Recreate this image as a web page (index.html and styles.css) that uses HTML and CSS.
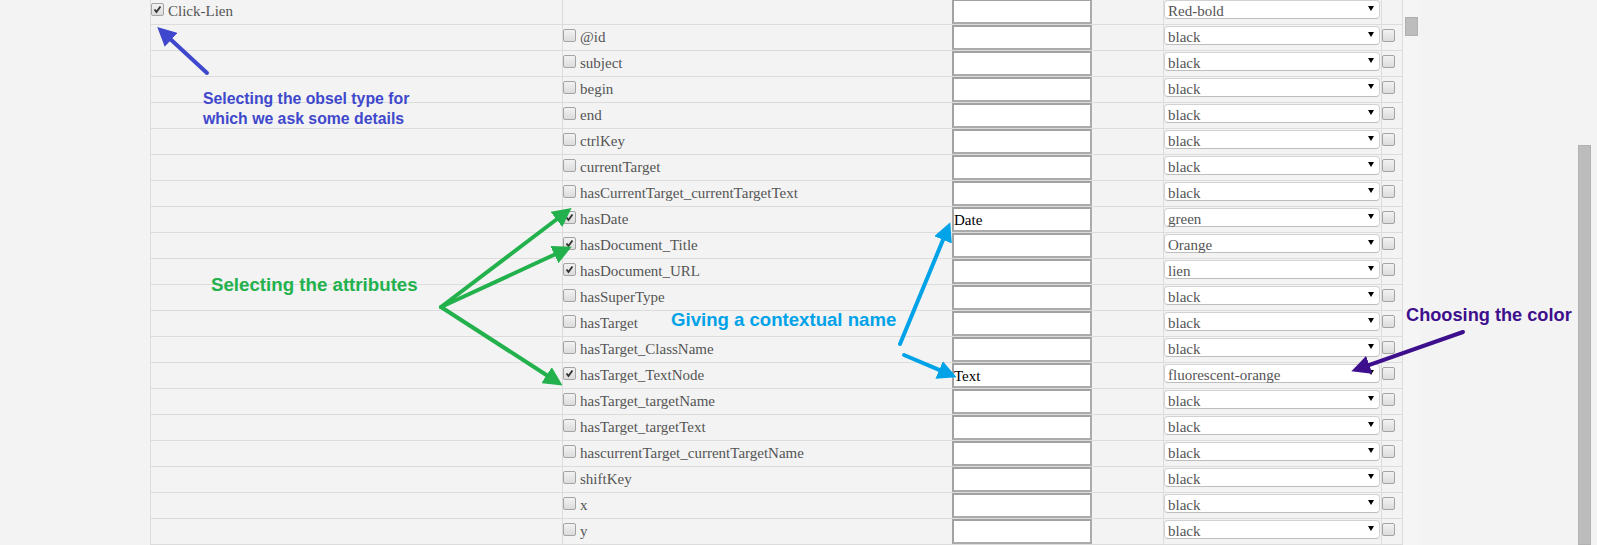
FILE: index.html
```html
<!DOCTYPE html>
<html>
<head>
<meta charset="utf-8">
<link rel="stylesheet" href="styles.css">
</head>
<body>
<div class="main">
  <div class="table">
    <div class="row">
      <div class="cell c1"><span class="cb on"><svg viewBox="0 0 13 13"><path d="M3 6.5 L5.3 9.5 L10 3" /></svg></span><span class="lbl">Click-Lien</span></div>
      <div class="cell c2"></div>
      <div class="cell c3"><div class="inp"></div></div>
      <div class="cell c4"></div>
      <div class="cell c5"><div class="sel"><span>Red-bold</span><svg class="arr" viewBox="0 0 6 5"><path d="M0 0 H6 L3 5 Z"/></svg></div></div>
      <div class="cell c6"></div>
    </div>
    <div class="row"><div class="cell c1"></div><div class="cell c2"><span class="cb"></span><span class="lbl">@id</span></div><div class="cell c3"><div class="inp"></div></div><div class="cell c4"></div><div class="cell c5"><div class="sel"><span>black</span><svg class="arr" viewBox="0 0 6 5"><path d="M0 0 H6 L3 5 Z"/></svg></div></div><div class="cell c6"><span class="cb"></span></div></div>
    <div class="row"><div class="cell c1"></div><div class="cell c2"><span class="cb"></span><span class="lbl">subject</span></div><div class="cell c3"><div class="inp"></div></div><div class="cell c4"></div><div class="cell c5"><div class="sel"><span>black</span><svg class="arr" viewBox="0 0 6 5"><path d="M0 0 H6 L3 5 Z"/></svg></div></div><div class="cell c6"><span class="cb"></span></div></div>
    <div class="row"><div class="cell c1"></div><div class="cell c2"><span class="cb"></span><span class="lbl">begin</span></div><div class="cell c3"><div class="inp"></div></div><div class="cell c4"></div><div class="cell c5"><div class="sel"><span>black</span><svg class="arr" viewBox="0 0 6 5"><path d="M0 0 H6 L3 5 Z"/></svg></div></div><div class="cell c6"><span class="cb"></span></div></div>
    <div class="row"><div class="cell c1"></div><div class="cell c2"><span class="cb"></span><span class="lbl">end</span></div><div class="cell c3"><div class="inp"></div></div><div class="cell c4"></div><div class="cell c5"><div class="sel"><span>black</span><svg class="arr" viewBox="0 0 6 5"><path d="M0 0 H6 L3 5 Z"/></svg></div></div><div class="cell c6"><span class="cb"></span></div></div>
    <div class="row"><div class="cell c1"></div><div class="cell c2"><span class="cb"></span><span class="lbl">ctrlKey</span></div><div class="cell c3"><div class="inp"></div></div><div class="cell c4"></div><div class="cell c5"><div class="sel"><span>black</span><svg class="arr" viewBox="0 0 6 5"><path d="M0 0 H6 L3 5 Z"/></svg></div></div><div class="cell c6"><span class="cb"></span></div></div>
    <div class="row"><div class="cell c1"></div><div class="cell c2"><span class="cb"></span><span class="lbl">currentTarget</span></div><div class="cell c3"><div class="inp"></div></div><div class="cell c4"></div><div class="cell c5"><div class="sel"><span>black</span><svg class="arr" viewBox="0 0 6 5"><path d="M0 0 H6 L3 5 Z"/></svg></div></div><div class="cell c6"><span class="cb"></span></div></div>
    <div class="row"><div class="cell c1"></div><div class="cell c2"><span class="cb"></span><span class="lbl">hasCurrentTarget_currentTargetText</span></div><div class="cell c3"><div class="inp"></div></div><div class="cell c4"></div><div class="cell c5"><div class="sel"><span>black</span><svg class="arr" viewBox="0 0 6 5"><path d="M0 0 H6 L3 5 Z"/></svg></div></div><div class="cell c6"><span class="cb"></span></div></div>
    <div class="row"><div class="cell c1"></div><div class="cell c2"><span class="cb on"><svg viewBox="0 0 13 13"><path d="M3 6.5 L5.3 9.5 L10 3" /></svg></span><span class="lbl">hasDate</span></div><div class="cell c3"><div class="inp">Date</div></div><div class="cell c4"></div><div class="cell c5"><div class="sel"><span>green</span><svg class="arr" viewBox="0 0 6 5"><path d="M0 0 H6 L3 5 Z"/></svg></div></div><div class="cell c6"><span class="cb"></span></div></div>
    <div class="row"><div class="cell c1"></div><div class="cell c2"><span class="cb on"><svg viewBox="0 0 13 13"><path d="M3 6.5 L5.3 9.5 L10 3" /></svg></span><span class="lbl">hasDocument_Title</span></div><div class="cell c3"><div class="inp"></div></div><div class="cell c4"></div><div class="cell c5"><div class="sel"><span>Orange</span><svg class="arr" viewBox="0 0 6 5"><path d="M0 0 H6 L3 5 Z"/></svg></div></div><div class="cell c6"><span class="cb"></span></div></div>
    <div class="row"><div class="cell c1"></div><div class="cell c2"><span class="cb on"><svg viewBox="0 0 13 13"><path d="M3 6.5 L5.3 9.5 L10 3" /></svg></span><span class="lbl">hasDocument_URL</span></div><div class="cell c3"><div class="inp"></div></div><div class="cell c4"></div><div class="cell c5"><div class="sel"><span>lien</span><svg class="arr" viewBox="0 0 6 5"><path d="M0 0 H6 L3 5 Z"/></svg></div></div><div class="cell c6"><span class="cb"></span></div></div>
    <div class="row"><div class="cell c1"></div><div class="cell c2"><span class="cb"></span><span class="lbl">hasSuperType</span></div><div class="cell c3"><div class="inp"></div></div><div class="cell c4"></div><div class="cell c5"><div class="sel"><span>black</span><svg class="arr" viewBox="0 0 6 5"><path d="M0 0 H6 L3 5 Z"/></svg></div></div><div class="cell c6"><span class="cb"></span></div></div>
    <div class="row"><div class="cell c1"></div><div class="cell c2"><span class="cb"></span><span class="lbl">hasTarget</span></div><div class="cell c3"><div class="inp"></div></div><div class="cell c4"></div><div class="cell c5"><div class="sel"><span>black</span><svg class="arr" viewBox="0 0 6 5"><path d="M0 0 H6 L3 5 Z"/></svg></div></div><div class="cell c6"><span class="cb"></span></div></div>
    <div class="row"><div class="cell c1"></div><div class="cell c2"><span class="cb"></span><span class="lbl">hasTarget_ClassName</span></div><div class="cell c3"><div class="inp"></div></div><div class="cell c4"></div><div class="cell c5"><div class="sel"><span>black</span><svg class="arr" viewBox="0 0 6 5"><path d="M0 0 H6 L3 5 Z"/></svg></div></div><div class="cell c6"><span class="cb"></span></div></div>
    <div class="row"><div class="cell c1"></div><div class="cell c2"><span class="cb on"><svg viewBox="0 0 13 13"><path d="M3 6.5 L5.3 9.5 L10 3" /></svg></span><span class="lbl">hasTarget_TextNode</span></div><div class="cell c3"><div class="inp">Text</div></div><div class="cell c4"></div><div class="cell c5"><div class="sel"><span>fluorescent-orange</span><svg class="arr" viewBox="0 0 6 5"><path d="M0 0 H6 L3 5 Z"/></svg></div></div><div class="cell c6"><span class="cb"></span></div></div>
    <div class="row"><div class="cell c1"></div><div class="cell c2"><span class="cb"></span><span class="lbl">hasTarget_targetName</span></div><div class="cell c3"><div class="inp"></div></div><div class="cell c4"></div><div class="cell c5"><div class="sel"><span>black</span><svg class="arr" viewBox="0 0 6 5"><path d="M0 0 H6 L3 5 Z"/></svg></div></div><div class="cell c6"><span class="cb"></span></div></div>
    <div class="row"><div class="cell c1"></div><div class="cell c2"><span class="cb"></span><span class="lbl">hasTarget_targetText</span></div><div class="cell c3"><div class="inp"></div></div><div class="cell c4"></div><div class="cell c5"><div class="sel"><span>black</span><svg class="arr" viewBox="0 0 6 5"><path d="M0 0 H6 L3 5 Z"/></svg></div></div><div class="cell c6"><span class="cb"></span></div></div>
    <div class="row"><div class="cell c1"></div><div class="cell c2"><span class="cb"></span><span class="lbl">hascurrentTarget_currentTargetName</span></div><div class="cell c3"><div class="inp"></div></div><div class="cell c4"></div><div class="cell c5"><div class="sel"><span>black</span><svg class="arr" viewBox="0 0 6 5"><path d="M0 0 H6 L3 5 Z"/></svg></div></div><div class="cell c6"><span class="cb"></span></div></div>
    <div class="row"><div class="cell c1"></div><div class="cell c2"><span class="cb"></span><span class="lbl">shiftKey</span></div><div class="cell c3"><div class="inp"></div></div><div class="cell c4"></div><div class="cell c5"><div class="sel"><span>black</span><svg class="arr" viewBox="0 0 6 5"><path d="M0 0 H6 L3 5 Z"/></svg></div></div><div class="cell c6"><span class="cb"></span></div></div>
    <div class="row"><div class="cell c1"></div><div class="cell c2"><span class="cb"></span><span class="lbl">x</span></div><div class="cell c3"><div class="inp"></div></div><div class="cell c4"></div><div class="cell c5"><div class="sel"><span>black</span><svg class="arr" viewBox="0 0 6 5"><path d="M0 0 H6 L3 5 Z"/></svg></div></div><div class="cell c6"><span class="cb"></span></div></div>
    <div class="row"><div class="cell c1"></div><div class="cell c2"><span class="cb"></span><span class="lbl">y</span></div><div class="cell c3"><div class="inp"></div></div><div class="cell c4"></div><div class="cell c5"><div class="sel"><span>black</span><svg class="arr" viewBox="0 0 6 5"><path d="M0 0 H6 L3 5 Z"/></svg></div></div><div class="cell c6"><span class="cb"></span></div></div>
  </div>
  <div class="vtrack"><div class="vthumb"></div></div>
  <div class="spacer"></div>
  <div class="pagebar"><div class="pagethumb"></div></div>
</div>

<svg class="overlay" width="1597" height="545" viewBox="0 0 1597 545">
  <defs>
    <marker id="hBlue" viewBox="0 0 10 10" refX="3" refY="5" markerWidth="19" markerHeight="19" markerUnits="userSpaceOnUse" orient="auto"><path d="M0 0 L10 5 L0 10 Z" fill="#3f48cc"/></marker>
    <marker id="hGreen" viewBox="0 0 10 10" refX="3" refY="5" markerWidth="19" markerHeight="19" markerUnits="userSpaceOnUse" orient="auto"><path d="M0 0 L10 5 L0 10 Z" fill="#22b14c"/></marker>
    <marker id="hTurq" viewBox="0 0 10 10" refX="3" refY="5" markerWidth="19" markerHeight="19" markerUnits="userSpaceOnUse" orient="auto"><path d="M0 0 L10 5 L0 10 Z" fill="#00a2e8"/></marker>
    <marker id="hPurp" viewBox="0 0 10 10" refX="3" refY="5" markerWidth="19" markerHeight="19" markerUnits="userSpaceOnUse" orient="auto"><path d="M0 0 L10 5 L0 10 Z" fill="#3e0f8c"/></marker>
  </defs>
  <line x1="207" y1="73" x2="167" y2="36" stroke="#3f48cc" stroke-width="4" stroke-linecap="round" marker-end="url(#hBlue)"/>
  <line x1="441" y1="307" x2="561" y2="216" stroke="#22b14c" stroke-width="4" stroke-linecap="round" marker-end="url(#hGreen)"/>
  <line x1="441" y1="307" x2="559.6" y2="252.3" stroke="#22b14c" stroke-width="4" stroke-linecap="round" marker-end="url(#hGreen)"/>
  <line x1="441" y1="307" x2="551.4" y2="378.2" stroke="#22b14c" stroke-width="4" stroke-linecap="round" marker-end="url(#hGreen)"/>
  <line x1="900" y1="344" x2="945.2" y2="234.6" stroke="#00a2e8" stroke-width="4" stroke-linecap="round" marker-end="url(#hTurq)"/>
  <line x1="904" y1="355" x2="944.4" y2="372.1" stroke="#00a2e8" stroke-width="4" stroke-linecap="round" marker-end="url(#hTurq)"/>
  <line x1="1463" y1="332" x2="1363.9" y2="366.8" stroke="#3e0f8c" stroke-width="4" stroke-linecap="round" marker-end="url(#hPurp)"/>
</svg>

<div class="note n-blue">Selecting the obsel type for<br>which we ask some details</div>
<div class="note n-green">Selecting the attributes</div>
<div class="note n-turq">Giving a contextual name</div>
<div class="note n-purp">Choosing the color</div>
</body>
</html>
```

FILE: styles.css
```css
html, body {
  margin: 0;
  padding: 0;
}
body {
  width: 1597px;
  height: 545px;
  overflow: hidden;
  position: relative;
  background: #f3f3f3;
  font-family: "Liberation Serif", "Times New Roman", serif;
}
.main {
  display: flex;
  align-items: flex-start;
  margin-top: -1px;
  padding-left: 150px;
}
.table {
  display: flex;
  flex-direction: column;
}
.row {
  display: grid;
  grid-template-columns: 412px 390px 140px 71px 218px 22px;
  height: 26px;
  box-sizing: border-box;
  border-bottom: 1px solid #dcdcdc;
}
.cell {
  box-sizing: border-box;
  display: flex;
  align-items: flex-start;
  min-width: 0;
}
.c1, .c2, .c5, .c6 {
  border-left: 1px solid #dcdcdc;
}
.c6 {
  border-right: 1px solid #dcdcdc;
}
.cb {
  width: 13px;
  height: 13px;
  box-sizing: border-box;
  margin-top: 4px;
  flex: none;
  border: 1px solid #a4a4a4;
  border-radius: 2px;
  background: linear-gradient(#f2f2f2, #dcdcdc);
  display: block;
}
.cb svg {
  display: block;
  width: 11px;
  height: 11px;
}
.cb svg path {
  fill: none;
  stroke: #333;
  stroke-width: 2.2;
}
.lbl {
  margin-left: 4px;
  padding-top: 2px;
  font-size: 15px;
  line-height: 20px;
  color: #555;
  white-space: nowrap;
}
.inp {
  width: 140px;
  height: 25px;
  box-sizing: border-box;
  background: #fff;
  border: 2px solid #ababab;
  border-top-color: #a2a2a2;
  border-left-color: #a2a2a2;
  font-size: 15px;
  line-height: 21px;
  padding-top: 1px;
  color: #000;
}
.sel {
  width: 216px;
  height: 19px;
  margin-top: 1px;
  box-sizing: border-box;
  background: #fff;
  border: 1px solid #d2d2d2;
  border-bottom-color: #bdbdbd;
  border-radius: 4px;
  display: flex;
  align-items: flex-start;
  justify-content: space-between;
  padding-left: 3px;
  padding-right: 5px;
  font-size: 15px;
  line-height: 19px;
  color: #555;
}
.sel span {
  margin-top: 1px;
}
.arr {
  width: 6px;
  height: 5px;
  margin-top: 5px;
  flex: none;
}
.arr path {
  fill: #000;
}
.vtrack {
  width: 17px;
  height: 546px;
  background: #f5f5f5;
  display: flex;
  flex-direction: column;
  align-items: flex-start;
}
.vthumb {
  width: 13px;
  height: 19px;
  margin-top: 18px;
  margin-left: 2px;
  box-sizing: border-box;
  background: #bdbdbd;
  border: 1px solid #b0b0b0;
}
.spacer {
  flex: 1;
}
.pagebar {
  width: 19px;
  height: 546px;
  display: flex;
  flex-direction: column;
}
.pagethumb {
  width: 13px;
  height: 400px;
  margin-top: 146px;
  box-sizing: border-box;
  background: #bcbcbc;
  border: 1px solid #b2b2b2;
}
.overlay {
  position: absolute;
  left: 0;
  top: 0;
  pointer-events: none;
}
.note {
  position: absolute;
  font-family: "Liberation Sans", Arial, sans-serif;
  font-weight: bold;
  white-space: nowrap;
}
.n-blue {
  left: 203px;
  top: 89px;
  font-size: 15.8px;
  line-height: 20px;
  color: #3f48cc;
}
.n-green {
  left: 211px;
  top: 274px;
  font-size: 18.7px;
  line-height: 22px;
  color: #22b14c;
}
.n-turq {
  left: 671px;
  top: 309px;
  font-size: 18.6px;
  line-height: 22px;
  color: #00a2e8;
}
.n-purp {
  left: 1406px;
  top: 304px;
  font-size: 18.2px;
  line-height: 22px;
  color: #3e0f8c;
}
```
